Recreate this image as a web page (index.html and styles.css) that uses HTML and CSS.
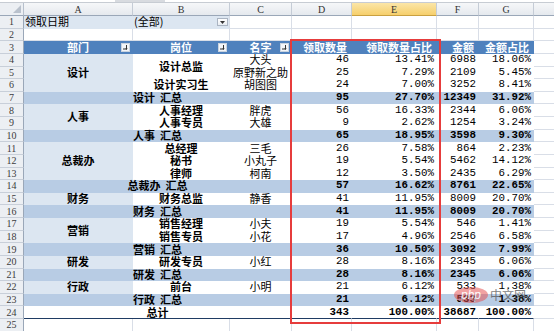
FILE: index.html
```html
<!DOCTYPE html>
<html>
<head>
<meta charset="utf-8">
<link rel="stylesheet" href="styles.css">
</head>
<body>
<div class="topbar"><span class="fx"></span></div>
<div class="sheet">
  <div class="c corner"><svg width="8" height="8" viewBox="0 0 8 8"><polygon points="8,0 8,8 0,8" fill="#b9c1cc"/></svg></div>
  <div class="c ch">A</div><div class="c ch">B</div><div class="c ch">C</div><div class="c ch">D</div><div class="c ch sel">E</div><div class="c ch">F</div><div class="c ch">G</div><div class="c ch end"></div>

  <div class="c rn">1</div><div class="c flt">领取日期</div><div class="c flt fv">(全部)<span class="dd"><svg width="5" height="3" viewBox="0 0 5 3"><polygon points="0,0 5,0 2.5,3" fill="#333"/></svg></span></div><div class="c"></div><div class="c"></div><div class="c"></div><div class="c"></div><div class="c"></div><div class="c h"></div>

  <div class="c rn">2</div><div class="c"></div><div class="c"></div><div class="c"></div><div class="c"></div><div class="c"></div><div class="c"></div><div class="c"></div><div class="c h"></div>

  <div class="c rn">3</div>
  <div class="c pv th ctr">部门<span class="fb"><svg width="9" height="9" viewBox="0 0 9 9"><rect x="0.5" y="0.5" width="8" height="8" fill="#f3f5f8" stroke="#c9d3df"/><path d="M2 6h3.5M5.5 2v4.5" stroke="#333" stroke-width="1" fill="none"/><path d="M4.3 5.2L5.5 6.8 6.7 5.2z" fill="#333"/></svg></span></div>
  <div class="c pv th ctr">岗位<span class="fb"><svg width="9" height="9" viewBox="0 0 9 9"><rect x="0.5" y="0.5" width="8" height="8" fill="#f3f5f8" stroke="#c9d3df"/><path d="M2 6h3.5M5.5 2v4.5" stroke="#333" stroke-width="1" fill="none"/><path d="M4.3 5.2L5.5 6.8 6.7 5.2z" fill="#333"/></svg></span></div>
  <div class="c pv th ctr">名字<span class="fb"><svg width="9" height="9" viewBox="0 0 9 9"><rect x="0.5" y="0.5" width="8" height="8" fill="#f3f5f8" stroke="#c9d3df"/><path d="M2 6h3.5M5.5 2v4.5" stroke="#333" stroke-width="1" fill="none"/><path d="M4.3 5.2L5.5 6.8 6.7 5.2z" fill="#333"/></svg></span></div>
  <div class="c pv th rt">领取数量</div><div class="c pv th rt">领取数量占比</div><div class="c pv th rt">金额</div><div class="c pv th rt">金额占比</div><div class="c h"></div>

  <div class="c rn">4</div><div class="c pv dept s3">设计</div><div class="c pv pos s2">设计总监</div><div class="c pv nm">大头</div><div class="c pv num">46</div><div class="c pv num">13.41%</div><div class="c pv num">6988</div><div class="c pv num">18.06%</div><div class="c h"></div>
  <div class="c rn">5</div><div class="c pv nm">原野新之助</div><div class="c pv num">25</div><div class="c pv num">7.29%</div><div class="c pv num">2109</div><div class="c pv num">5.45%</div><div class="c h"></div>
  <div class="c rn">6</div><div class="c pv pos">设计实习生</div><div class="c pv nm">胡图图</div><div class="c pv num">24</div><div class="c pv num">7.00%</div><div class="c pv num">3252</div><div class="c pv num">8.41%</div><div class="c h"></div>
  <div class="c rn">7</div><div class="c pv sub w3">设计  汇总</div><div class="c pv sub num">95</div><div class="c pv sub num">27.70%</div><div class="c pv sub num">12349</div><div class="c pv sub num">31.92%</div><div class="c h"></div>

  <div class="c rn">8</div><div class="c pv dept s2">人事</div><div class="c pv pos">人事经理</div><div class="c pv nm">胖虎</div><div class="c pv num">56</div><div class="c pv num">16.33%</div><div class="c pv num">2344</div><div class="c pv num">6.06%</div><div class="c h"></div>
  <div class="c rn">9</div><div class="c pv pos">人事专员</div><div class="c pv nm">大雄</div><div class="c pv num">9</div><div class="c pv num">2.62%</div><div class="c pv num">1254</div><div class="c pv num">3.24%</div><div class="c h"></div>
  <div class="c rn">10</div><div class="c pv sub w3">人事  汇总</div><div class="c pv sub num">65</div><div class="c pv sub num">18.95%</div><div class="c pv sub num">3598</div><div class="c pv sub num">9.30%</div><div class="c h"></div>

  <div class="c rn">11</div><div class="c pv dept s3">总裁办</div><div class="c pv pos">总经理</div><div class="c pv nm">三毛</div><div class="c pv num">26</div><div class="c pv num">7.58%</div><div class="c pv num">864</div><div class="c pv num">2.23%</div><div class="c h"></div>
  <div class="c rn">12</div><div class="c pv pos">秘书</div><div class="c pv nm">小丸子</div><div class="c pv num">19</div><div class="c pv num">5.54%</div><div class="c pv num">5462</div><div class="c pv num">14.12%</div><div class="c h"></div>
  <div class="c rn">13</div><div class="c pv pos">律师</div><div class="c pv nm">柯南</div><div class="c pv num">12</div><div class="c pv num">3.50%</div><div class="c pv num">2435</div><div class="c pv num">6.29%</div><div class="c h"></div>
  <div class="c rn">14</div><div class="c pv sub w3">总裁办  汇总</div><div class="c pv sub num">57</div><div class="c pv sub num">16.62%</div><div class="c pv sub num">8761</div><div class="c pv sub num">22.65%</div><div class="c h"></div>

  <div class="c rn">15</div><div class="c pv dept">财务</div><div class="c pv pos">财务总监</div><div class="c pv nm">静香</div><div class="c pv num">41</div><div class="c pv num">11.95%</div><div class="c pv num">8009</div><div class="c pv num">20.70%</div><div class="c h"></div>
  <div class="c rn">16</div><div class="c pv sub w3">财务  汇总</div><div class="c pv sub num">41</div><div class="c pv sub num">11.95%</div><div class="c pv sub num">8009</div><div class="c pv sub num">20.70%</div><div class="c h"></div>

  <div class="c rn">17</div><div class="c pv dept s2">营销</div><div class="c pv pos">销售经理</div><div class="c pv nm">小夫</div><div class="c pv num">19</div><div class="c pv num">5.54%</div><div class="c pv num">546</div><div class="c pv num">1.41%</div><div class="c h"></div>
  <div class="c rn">18</div><div class="c pv pos">销售专员</div><div class="c pv nm">小花</div><div class="c pv num">17</div><div class="c pv num">4.96%</div><div class="c pv num">2546</div><div class="c pv num">6.58%</div><div class="c h"></div>
  <div class="c rn">19</div><div class="c pv sub w3">营销  汇总</div><div class="c pv sub num">36</div><div class="c pv sub num">10.50%</div><div class="c pv sub num">3092</div><div class="c pv sub num">7.99%</div><div class="c h"></div>

  <div class="c rn">20</div><div class="c pv dept">研发</div><div class="c pv pos">研发专员</div><div class="c pv nm">小红</div><div class="c pv num">28</div><div class="c pv num">8.16%</div><div class="c pv num">2345</div><div class="c pv num">6.06%</div><div class="c h"></div>
  <div class="c rn">21</div><div class="c pv sub w3">研发  汇总</div><div class="c pv sub num">28</div><div class="c pv sub num">8.16%</div><div class="c pv sub num">2345</div><div class="c pv sub num">6.06%</div><div class="c h"></div>

  <div class="c rn">22</div><div class="c pv dept">行政</div><div class="c pv pos">前台</div><div class="c pv nm">小明</div><div class="c pv num">21</div><div class="c pv num">6.12%</div><div class="c pv num">533</div><div class="c pv num">1.38%</div><div class="c h"></div>
  <div class="c rn">23</div><div class="c pv sub w3">行政  汇总</div><div class="c pv sub num">21</div><div class="c pv sub num">6.12%</div><div class="c pv sub num">533</div><div class="c pv sub num">1.38%</div><div class="c h"></div>

  <div class="c rn">24</div><div class="c pv tot w3">总计</div><div class="c pv tot num">343</div><div class="c pv tot num">100.00%</div><div class="c pv tot num">38687</div><div class="c pv tot num">100.00%</div><div class="c h"></div>

  <div class="c rn">25</div><div class="c"></div><div class="c"></div><div class="c"></div><div class="c"></div><div class="c"></div><div class="c"></div><div class="c"></div><div class="c h"></div>
</div>
<div class="redbox"></div>
<div class="wm"><span class="php">php</span><span class="zw">中文网</span></div>
</body>
</html>
```
FILE: styles.css
```css
html, body {
  margin: 0;
  padding: 0;
}
body {
  width: 554px;
  height: 331px;
  overflow: hidden;
  position: relative;
  background: #fff;
  font-family: "Noto Sans CJK SC", "Noto Sans", sans-serif;
  font-size: 11px;
  color: #000;
}
.topbar {
  height: 3px;
  box-sizing: border-box;
  border-bottom: 1px solid #c7ccd3;
  background: #fff;
  position: relative;
}
.fx {
  display: block;
  margin-left: 115px;
  width: 50px;
  height: 2px;
  background: #d8dbe0;
}
.sheet {
  display: grid;
  grid-template-columns: 24px 109px 97px 62px 60px 85px 42px 55px 20px;
  grid-template-rows: 13px repeat(25, 12.625px);
}
.c {
  box-sizing: border-box;
  border-right: 1px solid #d9dee7;
  border-bottom: 1px solid #d9dee7;
  overflow: visible;
  white-space: pre;
  display: flex;
  align-items: center;
  line-height: 11px;
  min-width: 0;
  min-height: 0;
}
.corner {
  background: #eceff3;
  border-right: 1px solid #b7c0cc;
  border-bottom: 1px solid #9aa7b8;
  justify-content: flex-end;
  align-items: flex-end;
  padding: 0 2px 2px 0;
}
.ch {
  justify-content: center;
  font-family: "Liberation Serif", serif;
  font-size: 10px;
  color: #333;
  background: linear-gradient(#f6f7f9, #e5e9ee);
  border-right: 1px solid #c5ccd6;
  border-bottom: 1px solid #9aa7b8;
}
.ch.sel {
  background: linear-gradient(#fbe6a8, #f6cf6c);
  border-bottom: 1px solid #c9a040;
}
.ch.end {
  border-right: none;
}
.rn {
  justify-content: center;
  font-family: "Liberation Serif", serif;
  font-size: 10px;
  color: #3c3c3c;
  background: #eceff3;
  border-right: 1px solid #9aa7b8;
  border-bottom: 1px solid #c8cfd9;
}
.h {
  border-right: none;
}
.flt {
  background: #dce6f1;
  padding-left: 1px;
  border-color: #dce6f1;
}
.flt.fv {
  border-right: 1px solid #d9dee7;
  position: relative;
}
.dd {
  position: absolute;
  right: 1px;
  top: 2px;
  width: 11px;
  height: 8px;
  box-sizing: border-box;
  border: 1px solid #aab4c2;
  background: linear-gradient(#ffffff, #e9edf2);
  display: flex;
  align-items: center;
  justify-content: center;
}
.pv {
  border-color: transparent;
  background: #fff;
}
.th {
  background: #4f81bd;
  color: #fff;
  font-weight: bold;
  position: relative;
}
.th.ctr {
  justify-content: center;
}
.th.rt {
  justify-content: flex-end;
  padding-right: 4px;
}
.fb {
  position: absolute;
  right: 2px;
  top: 2px;
  width: 9px;
  height: 9px;
  display: flex;
}
.dept {
  background: #dce6f1;
  font-weight: bold;
  justify-content: center;
}
.pos {
  font-weight: bold;
  justify-content: center;
}
.nm {
  justify-content: center;
}
.num {
  justify-content: flex-end;
  padding-right: 2px;
  font-family: "Liberation Mono", monospace;
  font-size: 10.8px;
}
.s2 { grid-row: span 2; }
.s3 { grid-row: span 3; }
.w3 { grid-column: span 3; justify-content: center; }
.sub {
  background: #b8cce4;
  font-weight: bold;
}
.tot {
  font-weight: bold;
  border-bottom: 1px solid #1f3b63;
}
.redbox {
  position: absolute;
  left: 290px;
  top: 39px;
  width: 151px;
  height: 285px;
  box-sizing: border-box;
  border: 2px solid #e63c3c;
}
.wm {
  position: absolute;
  left: 454px;
  top: 287px;
  display: flex;
  align-items: center;
  gap: 2px;
  opacity: 0.75;
}
.php {
  display: flex;
  align-items: center;
  justify-content: center;
  width: 34px;
  height: 16px;
  border-radius: 50%;
  background: rgba(230, 80, 80, 0.7);
  color: #fff;
  font-family: "Liberation Sans", sans-serif;
  font-size: 12px;
  font-style: italic;
}
.zw {
  font-size: 12px;
  color: #555;
  line-height: 1;
}
```
